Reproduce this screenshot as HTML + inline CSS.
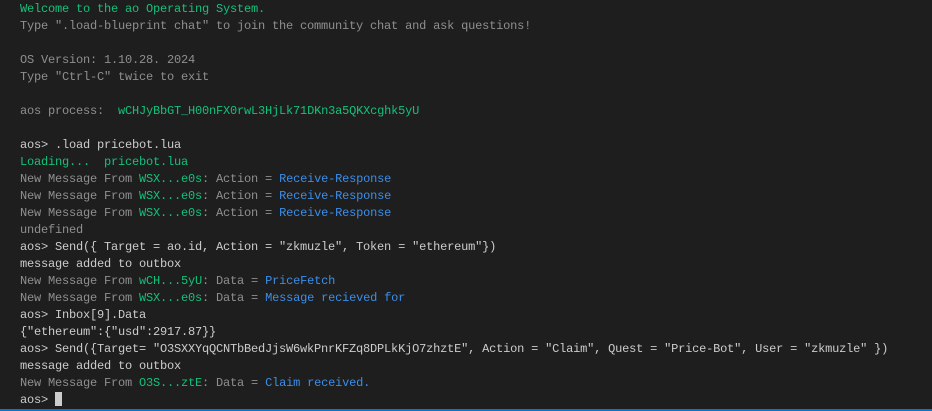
<!DOCTYPE html>
<html><head><meta charset="utf-8"><style>
html,body{margin:0;padding:0;background:#1e1e1e;width:932px;height:411px;overflow:hidden}
#t{position:absolute;left:20px;top:1px;font-family:"Liberation Mono",monospace;font-size:12px;letter-spacing:-0.2px;line-height:17px;white-space:pre;color:#cccccc}
.g{color:#14c07a}.d{color:#8f8f8f}.b{color:#3b8eea}
.c{display:inline-block;width:7px;height:14px;background:#cccccc;vertical-align:-3px}
#bar{position:absolute;left:0;bottom:0;width:932px;height:2px;background:#0078d4}
</style></head><body>
<div id="t"><span class="g">Welcome to the ao Operating System.</span>
<span class="d">Type ".load-blueprint chat" to join the community chat and ask questions!</span>

<span class="d">OS Version: 1.10.28. 2024</span>
<span class="d">Type "Ctrl-C" twice to exit</span>

<span class="d">aos process:  </span><span class="g">wCHJyBbGT_H00nFX0rwL3HjLk71DKn3a5QKXcghk5yU</span>

aos&gt; .load pricebot.lua
<span class="g">Loading...  pricebot.lua</span>
<span class="d">New Message From </span><span class="g">WSX...e0s</span><span class="d">: Action = </span><span class="b">Receive-Response</span>
<span class="d">New Message From </span><span class="g">WSX...e0s</span><span class="d">: Action = </span><span class="b">Receive-Response</span>
<span class="d">New Message From </span><span class="g">WSX...e0s</span><span class="d">: Action = </span><span class="b">Receive-Response</span>
<span class="d">undefined</span>
aos&gt; Send({ Target = ao.id, Action = "zkmuzle", Token = "ethereum"})
message added to outbox
<span class="d">New Message From </span><span class="g">wCH...5yU</span><span class="d">: Data = </span><span class="b">PriceFetch</span>
<span class="d">New Message From </span><span class="g">WSX...e0s</span><span class="d">: Data = </span><span class="b">Message recieved for</span>
aos&gt; Inbox[9].Data
{"ethereum":{"usd":2917.87}}
aos&gt; Send({Target= "O3SXXYqQCNTbBedJjsW6wkPnrKFZq8DPLkKjO7zhztE", Action = "Claim", Quest = "Price-Bot", User = "zkmuzle" })
message added to outbox
<span class="d">New Message From </span><span class="g">O3S...ztE</span><span class="d">: Data = </span><span class="b">Claim received.</span>
aos&gt; <span class="c"></span></div>
<div id="bar"></div>
</body></html>
